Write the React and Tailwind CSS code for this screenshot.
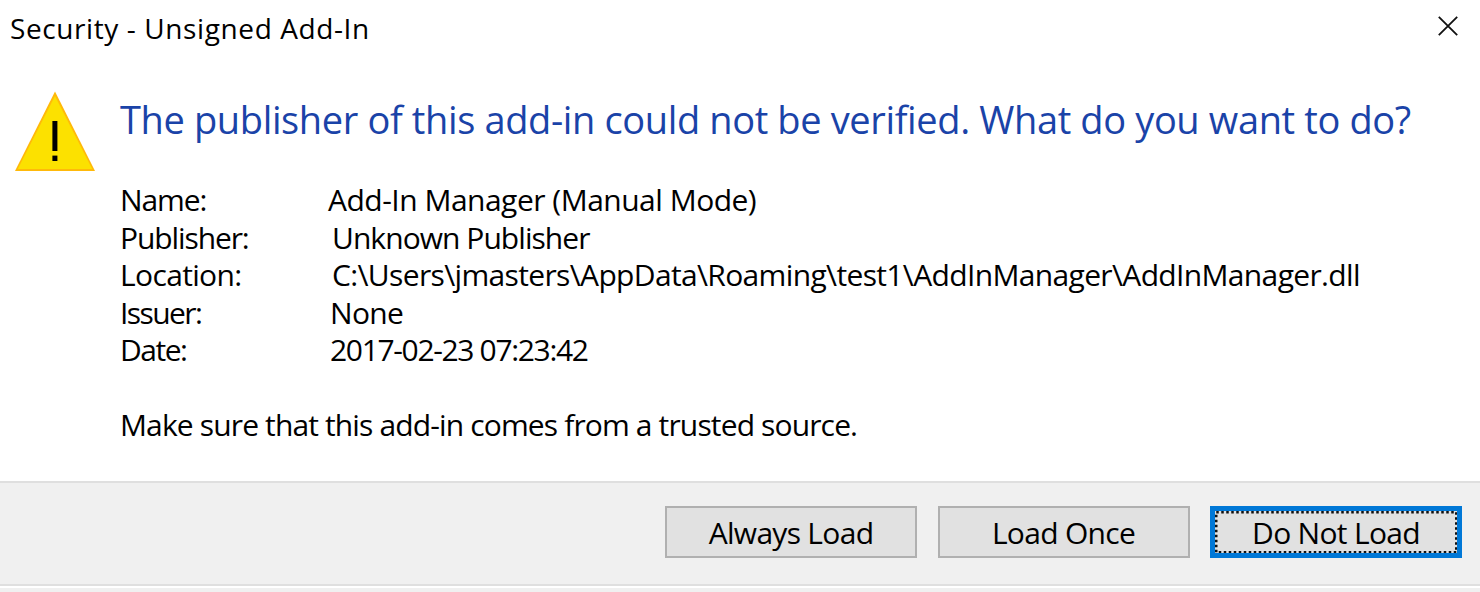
const details = [
  {
    label: "Name:",
    value: "Add-In Manager (Manual Mode)",
    labelClass: "tracking-[-1.1px]",
    valueClass: "tracking-[-0.5px]",
  },
  {
    label: "Publisher:",
    value: "Unknown Publisher",
    labelClass: "tracking-[-1.1px]",
    valueClass: "pl-[4px] tracking-[-0.95px]",
  },
  {
    label: "Location:",
    value: "C:\\Users\\jmasters\\AppData\\Roaming\\test1\\AddInManager\\AddInManager.dll",
    labelClass: "tracking-[-0.65px]",
    valueClass: "pl-[4px] tracking-[-0.65px]",
  },
  {
    label: "Issuer:",
    value: "None",
    labelClass: "tracking-[-1.6px]",
    valueClass: "pl-[2px] tracking-[-0.7px]",
  },
  {
    label: "Date:",
    value: "2017-02-23 07:23:42",
    labelClass: "tracking-[-1.5px]",
    valueClass: "pl-[2px] tracking-[-1.34px]",
  },
];

function WarningIcon() {
  return (
    <svg className="block h-[80px] w-[82px] shrink-0" viewBox="0 0 82 80" aria-hidden="true">
      <path d="M41 0.5 L81 80 H1 Z" fill="#ffb90a" />
      <path d="M41 5 L78.2 78 H3.8 Z" fill="#fce100" />
      <rect x="38.4" y="30" width="5" height="30" fill="#000" />
      <rect x="38.4" y="64.6" width="5" height="5.4" fill="#000" />
    </svg>
  );
}

function FocusRing() {
  return (
    <svg className="absolute inset-0 h-[42px] w-[242px]" viewBox="0 0 242 42" aria-hidden="true">
      <rect
        x="1.25"
        y="1.25"
        width="240"
        height="40"
        fill="none"
        stroke="#111"
        strokeWidth="2.5"
        strokeDasharray="2.5 2.5"
      />
    </svg>
  );
}

function DialogButton({ children, focused }) {
  return (
    <button
      type="button"
      className={
        focused
          ? "relative h-[52px] w-[252px] border-[5px] border-[#0078d7] bg-[#e1e1e1]"
          : "h-[52px] w-[252px] border-2 border-[#b0b0b0] bg-[#e1e1e1]"
      }
    >
      {focused && <FocusRing />}
      <span className="flex h-full items-center justify-center pt-px">{children}</span>
    </button>
  );
}

export default function App() {
  return (
    <div className="flex h-[592px] w-[1480px] flex-col overflow-hidden whitespace-pre bg-white font-['Open_Sans','Noto_Sans',sans-serif] text-[30px] leading-[37.5px] text-black">
      <header className="flex h-[91px] justify-between pl-[10px] pr-[22px]">
        <h1 className="pt-[10px] text-[28px] tracking-[0.6px]">Security - Unsigned Add-In</h1>
        <svg className="mt-4 block h-[20px] w-[20px]" viewBox="0 0 20 20" aria-label="Close">
          <path d="M0.8 0.8 L19.2 19.2 M19.2 0.8 L0.8 19.2" stroke="#111" strokeWidth="1.8" />
        </svg>
      </header>
      <main className="flex h-[390px] pl-[14px]">
        <WarningIcon />
        <div className="pl-[24px]">
          <h2 className="h-[90px] pt-[10px] text-[38px] tracking-[-0.37px] text-[#1a43a8]">
            The publisher of this add-in could not be verified. What do you want to do?
          </h2>
          <dl>
            {details.map((d) => (
              <div key={d.label} className="flex">
                <dt className={"w-[208px] " + d.labelClass}>{d.label}</dt>
                <dd className={d.valueClass}>{d.value}</dd>
              </div>
            ))}
          </dl>
          <p className="pt-[37.5px] tracking-[-0.86px]">Make sure that this add-in comes from a trusted source.</p>
        </div>
      </main>
      <footer className="flex h-[105px] items-start justify-end gap-[20.5px] border-y-2 border-[#dfdfdf] bg-[#f0f0f0] pr-[18px] pt-[23px] tracking-[-0.7px]">
        <DialogButton>Always Load</DialogButton>
        <DialogButton>Load Once</DialogButton>
        <DialogButton focused>Do Not Load</DialogButton>
      </footer>
      <div className="mt-[2px] h-[4px] bg-[#f0f0f0]" />
    </div>
  );
}
